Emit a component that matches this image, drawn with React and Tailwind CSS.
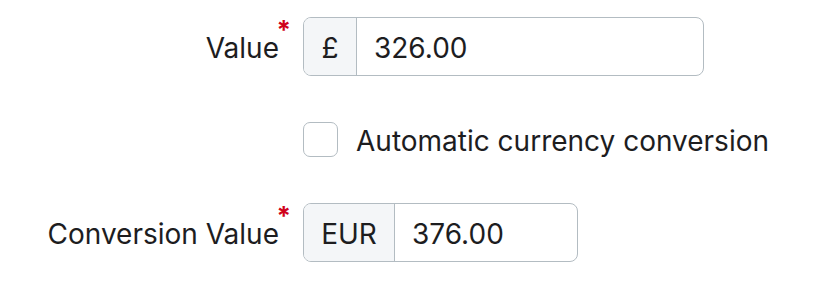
const Label = ({ children }) => (
  <div className="w-[293px] shrink-0 flex justify-end pt-[3px]">
    <span className="relative pr-[14px]">
      {children}
      <span className="absolute right-[2px] top-[-10px] text-[26px] font-bold leading-none text-[#d0021b]">*</span>
    </span>
  </div>
);

const AddonInput = ({ prefix, value, width, prefixWidth }) => (
  <div className={`ml-[10px] flex h-[59px] overflow-hidden rounded-[8px] border-[1.5px] border-[#b3bcc2] bg-white ${width}`}>
    <div className={`flex items-center justify-center border-r-[1.5px] border-[#b3bcc2] bg-[#f4f6f8] pt-[2px] ${prefixWidth}`}>{prefix}</div>
    <div className="flex flex-1 items-center pl-[17px] pt-[2px]">{value}</div>
  </div>
);

export default function App() {
  return (
    <div
      className="flex flex-col pt-[17px] text-[28px] text-[#1d1d1f]"
      style={{ fontFamily: 'Inter, "Noto Sans", sans-serif' }}
    >
      <div className="flex items-center">
        <Label>Value</Label>
        <AddonInput prefix="£" value="326.00" width="w-[401px]" prefixWidth="w-[53px]" />
      </div>

      <div className="mt-[46px] flex h-[35px] items-center pl-[303px]">
        <div className="h-[35px] w-[35px] rounded-[7px] border-[1.5px] border-[#b3bcc2] bg-white" />
        <span className="ml-[18px] pt-[3px]">Automatic currency conversion</span>
      </div>

      <div className="mt-[46px] flex items-center">
        <Label>Conversion Value</Label>
        <AddonInput prefix="EUR" value="376.00" width="w-[275px]" prefixWidth="w-[91px]" />
      </div>
    </div>
  );
}
